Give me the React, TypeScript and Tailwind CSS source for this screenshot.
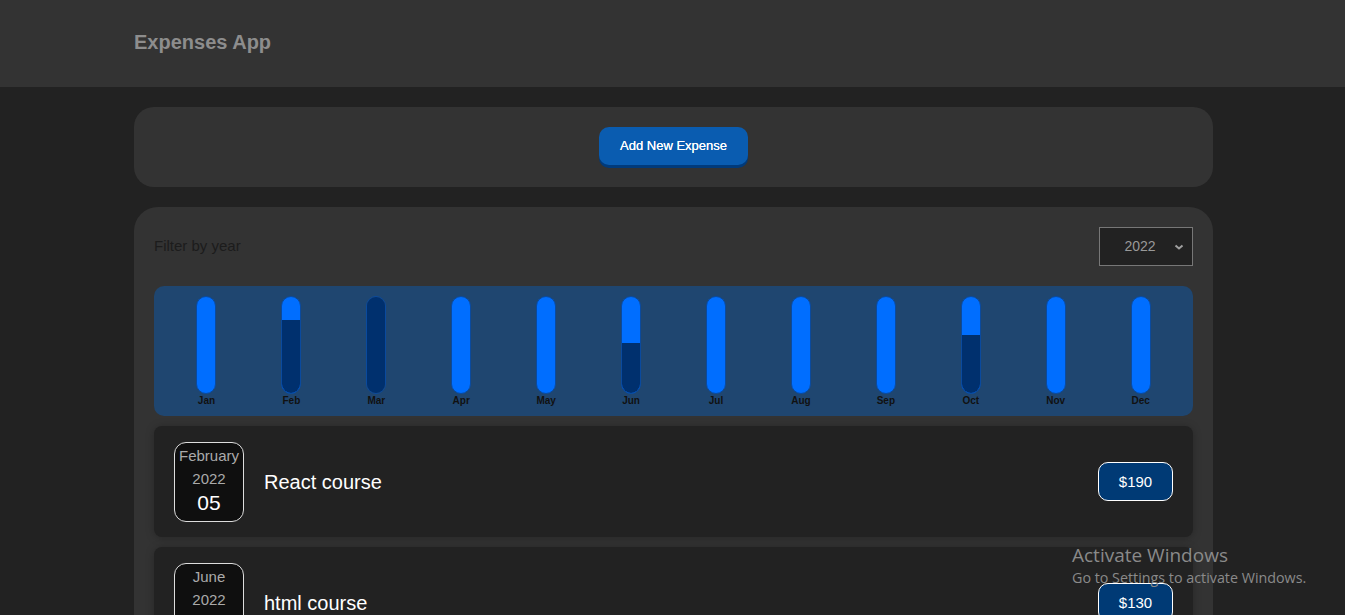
const months = [
  { label: "Jan", fill: 0 },
  { label: "Feb", fill: 76 },
  { label: "Mar", fill: 100 },
  { label: "Apr", fill: 0 },
  { label: "May", fill: 0 },
  { label: "Jun", fill: 52 },
  { label: "Jul", fill: 0 },
  { label: "Aug", fill: 0 },
  { label: "Sep", fill: 0 },
  { label: "Oct", fill: 60 },
  { label: "Nov", fill: 0 },
  { label: "Dec", fill: 0 },
];

const expenses = [
  { month: "February", year: "2022", day: "05", title: "React course", amount: "$190" },
  { month: "June", year: "2022", day: "14", title: "html course", amount: "$130" },
];

const ChartBar = ({ label, fill }: { label: string; fill: number }) => (
  <div className="flex flex-1 flex-col items-center">
    <div className="flex h-[98px] w-[20px] flex-col justify-end overflow-hidden rounded-full border border-[#0a4a9e] bg-[#006eff]">
      <div className="w-full bg-[#00306e]" style={{ height: `${fill}%` }} />
    </div>
    <span className="mt-[1px] text-[10px] font-bold leading-[12px] text-[#111]">{label}</span>
  </div>
);

const ExpenseItem = ({ month, year, day, title, amount }: (typeof expenses)[number]) => (
  <div className="flex h-[111px] items-center rounded-lg bg-[#222222] px-5 shadow-[0_1px_8px_rgba(0,0,0,0.25)]">
    <div className="flex h-[80px] w-[70px] flex-col items-center justify-center rounded-xl border border-[#ddd] bg-[#0f0f0f] pb-[3px]">
      <span className="text-[15px] leading-[22px] text-[#aaa]">{month}</span>
      <span className="text-[15px] leading-[24px] text-[#aaa]">{year}</span>
      <span className="text-[21px] leading-[24px] text-white">{day}</span>
    </div>
    <h2 className="ml-5 flex-1 text-[20px] text-white">{title}</h2>
    <div className="flex h-[39px] w-[75px] items-center justify-center rounded-[10px] border border-white bg-[#003a75] pt-[1px] text-[15px] text-white">
      {amount}
    </div>
  </div>
);

export default function App() {
  return (
    <div className="relative min-h-[615px] overflow-hidden bg-[#222222] font-['Liberation_Sans',Arial,sans-serif]">
      <header className="flex h-[87px] items-center bg-[#333333] px-[134px] pb-[3px]">
        <h1 className="text-[20px] font-bold text-[#8d8d8d]">Expenses App</h1>
      </header>

      <main className="ml-[134px] flex w-[1079px] flex-col gap-5 pt-5">
        <div className="flex h-[80px] items-center justify-center rounded-[20px] bg-[#333333] pb-[2px]">
          <button className="h-[38px] w-[149px] rounded-[10px] bg-[#0a5cb0] text-[13px] font-normal text-white shadow-[0_3px_0_#013a7a] [text-shadow:0_0_0.4px_#fff]">
            Add New Expense
          </button>
        </div>

        <div className="flex flex-col rounded-[24px] bg-[#333333] p-5">
          <div className="flex items-center justify-between">
            <span className="text-[15px] text-[#1c1c1c]">Filter by year</span>
            <div className="flex h-[39px] w-[94px] items-center justify-center gap-[18px] border border-[#777] bg-[#222222] pl-4">
              <span className="text-[14px] text-[#999]">2022</span>
              <svg width="10" height="8" viewBox="0 0 10 8" fill="none">
                <path d="M1.5 2.5 L5 5.5 L8.5 2.5" stroke="#a0a0a0" strokeWidth="2" />
              </svg>
            </div>
          </div>

          <div className="mt-5 flex h-[130px] rounded-[10px] bg-[#1f4670] px-[10px] pt-[10px]">
            {months.map((m) => (
              <ChartBar key={m.label} {...m} />
            ))}
          </div>

          <div className="mt-[10px] flex flex-col gap-[10px]">
            {expenses.map((e) => (
              <ExpenseItem key={e.title} {...e} />
            ))}
          </div>
        </div>
      </main>

      <div className="pointer-events-none absolute left-[1072px] top-[543px] font-['Open_Sans',sans-serif] text-[#8a8a8a]">
        <div className="text-[19px] leading-[25px]">Activate Windows</div>
        <div className="text-[14.3px] leading-[20px]">Go to Settings to activate Windows.</div>
      </div>
    </div>
  );
}
